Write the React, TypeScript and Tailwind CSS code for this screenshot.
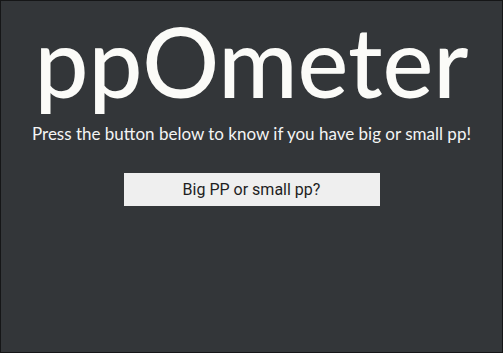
export default function App() {
  return (
    <div className="h-[353px] w-[503px] overflow-hidden border border-[#151617] bg-[#333639] text-white">
      <div className="flex flex-col items-center">
        <h1 className="mt-[8px] text-[96px] leading-[104px] font-['Lato',sans-serif] font-medium text-[#fbfbf8]">
          ppOmeter
        </h1>
        <p className="mt-[11px] text-[17px] leading-[20px] font-['Lato',sans-serif] text-[#f4f4f4]">
          Press the button below to know if you have big or small pp!
        </p>
        <button className="mt-[29px] h-[33px] w-[256px] bg-[#efefef] text-[16px] font-['Roboto',sans-serif] text-[#1e1e1e]">
          Big PP or small pp?
        </button>
      </div>
    </div>
  );
}
